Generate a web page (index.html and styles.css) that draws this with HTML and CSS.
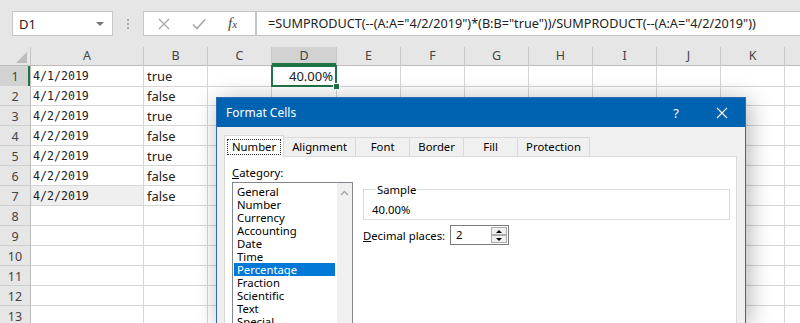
FILE: index.html
```html
<!DOCTYPE html>
<html lang="en">
<head>
    <meta charset="UTF-8">
    <title>SUMPRODUCT percentage</title>
    <link rel="stylesheet" href="styles.css">
</head>
<body>

<div class="formula-bar">
    <div class="name-box"><span>D1</span><span class="arrow"></span></div>
    <div class="grip"></div>
    <div class="fx-buttons">
        <svg width="12" height="12" viewBox="0 0 12 12"><path d="M1 1 L11 11 M11 1 L1 11" stroke="#a8a8a8" stroke-width="1.3" fill="none"/></svg>
        <svg width="14" height="12" viewBox="0 0 14 12"><path d="M1 6.5 L5 10.5 L13 1.5" stroke="#a8a8a8" stroke-width="1.6" fill="none"/></svg>
        <span class="fx">f<small>x</small></span>
    </div>
    <div class="formula">=SUMPRODUCT(--(A:A="4/2/2019")*(B:B="true"))/SUMPRODUCT(--(A:A="4/2/2019"))</div>
</div>

<div class="sheet">
    <div class="row head">
        <div class="corner"><span class="tri"></span></div>
        <div>A</div><div>B</div><div>C</div><div class="sel-col">D</div><div>E</div><div>F</div>
        <div>G</div><div>H</div><div>I</div><div>J</div><div>K</div><div></div>
    </div>
    <div class="row">
        <div class="rh sel-row">1</div>
        <div class="mono">4/1/2019</div><div>true</div><div></div><div class="num current">40.00%</div>
        <div></div><div></div><div></div><div></div><div></div><div></div><div></div><div></div>
    </div>
    <div class="row">
        <div class="rh">2</div>
        <div class="mono">4/1/2019</div><div>false</div><div></div><div></div>
        <div></div><div></div><div></div><div></div><div></div><div></div><div></div><div></div>
    </div>
    <div class="row">
        <div class="rh">3</div>
        <div class="mono">4/2/2019</div><div>true</div><div></div><div></div>
        <div></div><div></div><div></div><div></div><div></div><div></div><div></div><div></div>
    </div>
    <div class="row">
        <div class="rh">4</div>
        <div class="mono">4/2/2019</div><div>false</div><div></div><div></div>
        <div></div><div></div><div></div><div></div><div></div><div></div><div></div><div></div>
    </div>
    <div class="row">
        <div class="rh">5</div>
        <div class="mono">4/2/2019</div><div>true</div><div></div><div></div>
        <div></div><div></div><div></div><div></div><div></div><div></div><div></div><div></div>
    </div>
    <div class="row">
        <div class="rh">6</div>
        <div class="mono">4/2/2019</div><div>false</div><div></div><div></div>
        <div></div><div></div><div></div><div></div><div></div><div></div><div></div><div></div>
    </div>
    <div class="row">
        <div class="rh">7</div>
        <div class="mono hover">4/2/2019</div><div>false</div><div></div><div></div>
        <div></div><div></div><div></div><div></div><div></div><div></div><div></div><div></div>
    </div>
    <div class="row">
        <div class="rh">8</div>
        <div></div><div></div><div></div><div></div>
        <div></div><div></div><div></div><div></div><div></div><div></div><div></div><div></div>
    </div>
    <div class="row">
        <div class="rh">9</div>
        <div></div><div></div><div></div><div></div>
        <div></div><div></div><div></div><div></div><div></div><div></div><div></div><div></div>
    </div>
    <div class="row">
        <div class="rh">10</div>
        <div></div><div></div><div></div><div></div>
        <div></div><div></div><div></div><div></div><div></div><div></div><div></div><div></div>
    </div>
    <div class="row">
        <div class="rh">11</div>
        <div></div><div></div><div></div><div></div>
        <div></div><div></div><div></div><div></div><div></div><div></div><div></div><div></div>
    </div>
    <div class="row">
        <div class="rh">12</div>
        <div></div><div></div><div></div><div></div>
        <div></div><div></div><div></div><div></div><div></div><div></div><div></div><div></div>
    </div>
    <div class="row">
        <div class="rh">13</div>
        <div></div><div></div><div></div><div></div>
        <div></div><div></div><div></div><div></div><div></div><div></div><div></div><div></div>
    </div>
</div>

<!-- Format Cells dialog sits over the sheet -->
<div class="dialog">
    <div class="title-bar">
        <span class="title">Format Cells</span>
        <span class="help">?</span>
        <span class="close">
            <svg width="12" height="12" viewBox="0 0 12 12"><path d="M1 1 L11 11 M11 1 L1 11" stroke="#fff" stroke-width="1.1" fill="none"/></svg>
        </span>
    </div>
    <div class="dialog-body">
        <div class="tabs">
            <div class="tab active"><span class="focus">Number</span></div>
            <div class="tab">Alignment</div>
            <div class="tab">Font</div>
            <div class="tab">Border</div>
            <div class="tab">Fill</div>
            <div class="tab">Protection</div>
        </div>
        <div class="pane">
            <div class="cat-label"><u>C</u>ategory:</div>
            <div class="list">
                <div class="items">
                    <div>General</div>
                    <div>Number</div>
                    <div>Currency</div>
                    <div>Accounting</div>
                    <div>Date</div>
                    <div>Time</div>
                    <div class="selected">Percentage</div>
                    <div>Fraction</div>
                    <div>Scientific</div>
                    <div>Text</div>
                    <div>Special</div>
                </div>
                <div class="scrollbar">
                    <svg width="15" height="17" viewBox="0 0 15 17"><path d="M4 12 L7.5 8.5 L11 12" stroke="#a6a6a6" stroke-width="1.4" fill="none"/></svg>
                </div>
            </div>
            <div class="options">
                <fieldset class="sample">
                    <legend>Sample</legend>
                    <div>40.00%</div>
                </fieldset>
                <div class="decimals">
                    <span class="dec-label"><u>D</u>ecimal places:</span>
                    <div class="spin">
                        <span>2</span>
                        <div class="spin-btns">
                            <div class="up"><span></span></div>
                            <div class="down"><span></span></div>
                        </div>
                    </div>
                </div>
            </div>
        </div>
    </div>
</div>

</body>
</html>
```

FILE: styles.css
```css
body {
    margin: 0;
    width: 800px;
    height: 323px;
    overflow: hidden;
    background-color: #fff;
    font-family: "Noto Sans", sans-serif;
    color: #222;
}

/* formula bar */
.formula-bar {
    display: flex;
    align-items: flex-start;
    height: 47px;
    padding-top: 11px;
    box-sizing: border-box;
    background-color: #e6e6e6;
}
.name-box {
    display: flex;
    align-items: center;
    justify-content: space-between;
    width: 101px;
    height: 25px;
    margin-left: 12px;
    padding: 0 8px 0 6px;
    box-sizing: border-box;
    border: 1px solid #c6c6c6;
    background-color: #fff;
    font-size: 13px;
}
.name-box .arrow {
    border-left: 4px solid transparent;
    border-right: 4px solid transparent;
    border-top: 4px solid #777;
}
.grip {
    width: 2px;
    height: 10px;
    margin: 8px 14px 0 14px;
    background: repeating-linear-gradient(#aaa 0 2px, transparent 2px 4px);
}
.fx-buttons {
    display: flex;
    align-items: center;
    gap: 22px;
    width: 113px;
    height: 25px;
    padding-left: 14px;
    box-sizing: border-box;
    border: 1px solid #c6c6c6;
    background-color: #fff;
}
.fx {
    font-family: "Liberation Serif", serif;
    font-style: italic;
    font-size: 15px;
    color: #444;
}
.fx small {
    font-size: 11px;
}
.formula {
    flex: 1;
    height: 25px;
    padding-left: 11px;
    box-sizing: border-box;
    border: 1px solid #c6c6c6;
    border-right: none;
    background-color: #fff;
    font-size: 12.65px;
    line-height: 23px;
    white-space: nowrap;
    overflow: hidden;
    color: #222;
}

/* sheet grid */
.row {
    display: grid;
    grid-template-columns: 31px 113px 64px 64px 65px repeat(8, 64px);
    height: 20px;
}
.row > div {
    box-sizing: border-box;
    border-right: 1px solid #d6d6d6;
    border-bottom: 1px solid #d6d6d6;
    padding: 1px 3px 0;
    line-height: 19px;
    font-size: 13px;
    white-space: nowrap;
    overflow: hidden;
}
.row.head {
    height: 19px;
    background-color: #e6e6e6;
}
.row.head > div {
    padding: 0;
    line-height: 18px;
    text-align: center;
    font-size: 12.5px;
    color: #444;
    border-right-color: #c8c8c8;
    border-bottom-color: #bdbdbd;
}
.row.head > .sel-col {
    background-color: #d2d2d2;
    box-shadow: inset 0 -2px #217346;
}
.corner {
    display: flex;
    align-items: flex-end;
    justify-content: flex-end;
}
.corner .tri {
    margin: 0 3px 2px 0;
    border-left: 11px solid transparent;
    border-bottom: 11px solid #bcbcbc;
}
.row > .rh {
    padding: 1px 0 0;
    background-color: #e6e6e6;
    border-right-color: #bdbdbd;
    border-bottom-color: #cfcfcf;
    text-align: center;
    font-size: 12.5px;
    color: #444;
}
.row > .sel-row {
    background-color: #d2d2d2;
    box-shadow: inset -2px 0 #217346;
}
.row > .mono {
    font-family: "DejaVu Sans Mono", monospace;
    font-size: 11.6px;
    padding-left: 2px;
}
.row > .hover {
    background-color: #efefef;
}
.row > .num {
    text-align: right;
}
.row > .current {
    position: relative;
    overflow: visible;
}
.current::before {
    content: "";
    position: absolute;
    left: -1px;
    top: -1px;
    right: -1px;
    bottom: -1px;
    border: 2px solid #217346;
}
.current::after {
    content: "";
    position: absolute;
    right: -4px;
    bottom: -4px;
    width: 5px;
    height: 5px;
    background-color: #217346;
    border: 1px solid #fff;
}

/* dialog */
.dialog {
    position: absolute;
    left: 216px;
    top: 97px;
    width: 530px;
    height: 226px;
    overflow: hidden;
    box-sizing: border-box;
    border: 1px solid #2a6cb6;
    border-bottom: none;
    background-color: #f0f0f0;
    box-shadow: 3px 3px 22px rgba(0, 0, 0, 0.3);
    font-size: 11.3px;
    color: #000;
}
.title-bar {
    display: flex;
    align-items: center;
    height: 29px;
    padding-left: 9px;
    background-color: #0063b1;
    color: #fff;
}
.title {
    flex: 1;
    font-size: 12px;
}
.help, .close {
    width: 46px;
    text-align: center;
    font-size: 13px;
}
.close svg {
    display: block;
    margin: 0 auto;
}
.dialog-body {
    padding: 8px 8px 0 7px;
}
.tabs {
    display: flex;
    align-items: flex-end;
    height: 21px;
}
.tab {
    min-width: 54px;
    height: 19px;
    padding: 0 8px;
    box-sizing: border-box;
    border-top: 1px solid #d9d9d9;
    border-right: 1px solid #d9d9d9;
    line-height: 18px;
    text-align: center;
}
.tab.active {
    position: relative;
    z-index: 1;
    height: 22px;
    margin-bottom: -1px;
    padding: 3px 2px 0;
    border-left: 1px solid #d9d9d9;
    background-color: #fff;
}
.focus {
    display: block;
    height: 16px;
    padding: 0 4px;
    box-sizing: border-box;
    line-height: 14px;
    border: 1px dotted #333;
}
.pane {
    display: grid;
    grid-template-columns: 121px 1fr;
    grid-template-rows: 15px auto;
    column-gap: 10px;
    row-gap: 2px;
    height: 200px;
    padding: 8px 6px 0 7px;
    border: 1px solid #d9d9d9;
    background-color: #fff;
}
.cat-label {
    grid-column: 1;
    line-height: 15px;
}
.list {
    grid-column: 1;
    grid-row: 2;
    display: flex;
    height: 170px;
    border: 1px solid #828790;
}
.items {
    width: 104px;
    padding: 2px 2px 0 1px;
    box-sizing: border-box;
}
.items div {
    height: 13px;
    padding-left: 3px;
    line-height: 13px;
    white-space: nowrap;
}
.items .selected {
    background-color: #0078d7;
    color: #fff;
}
.scrollbar {
    flex: 1;
    background-color: #f0f0f0;
}
.scrollbar svg {
    display: block;
}
.options {
    grid-column: 2;
    grid-row: 2;
}
.sample {
    margin: 0;
    padding: 5px 8px 2px;
    border: 1px solid #dcdcdc;
}
.sample legend {
    margin-left: 4px;
    padding: 0 1px;
    line-height: 15px;
}
.sample div {
    line-height: 15px;
}
.decimals {
    display: flex;
    align-items: center;
    margin-top: 5px;
}
.dec-label {
    width: 87px;
}
.spin {
    display: flex;
    width: 59px;
    height: 20px;
    box-sizing: border-box;
    border: 1px solid #7a7a7a;
    background-color: #fff;
    line-height: 18px;
}
.spin > span {
    flex: 1;
    padding-left: 5px;
}
.spin-btns {
    display: flex;
    flex-direction: column;
    justify-content: space-between;
    width: 17px;
    padding: 1px 1px 1px 0;
    box-sizing: border-box;
}
.spin-btns div {
    display: flex;
    align-items: center;
    justify-content: center;
    height: 8px;
    border: 1px solid #adadad;
    background-color: #f0f0f0;
}
.up span {
    border-left: 3px solid transparent;
    border-right: 3px solid transparent;
    border-bottom: 3px solid #000;
}
.down span {
    border-left: 3px solid transparent;
    border-right: 3px solid transparent;
    border-top: 3px solid #000;
}
```
